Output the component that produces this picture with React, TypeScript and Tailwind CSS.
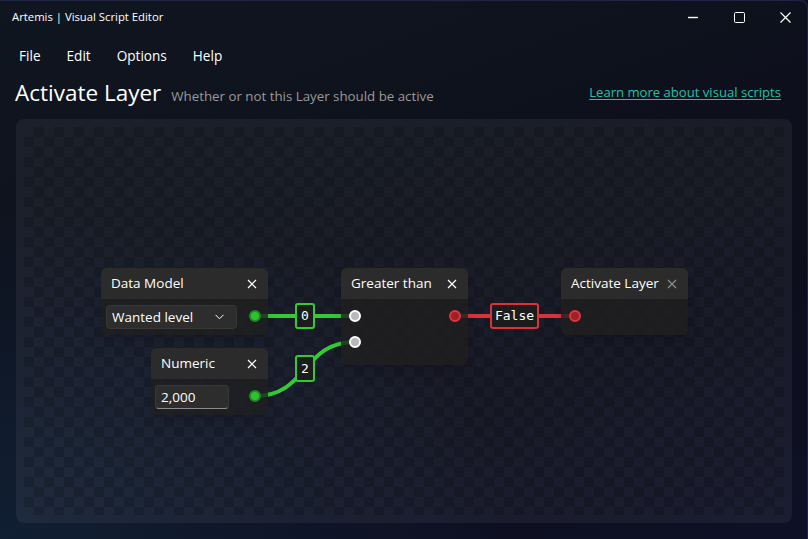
import React from "react";

type PinKind = "green" | "white" | "red";

const CloseIcon = ({ dim }: { dim?: boolean }) => (
  <svg width="10" height="10" viewBox="0 0 10 10" className={dim ? "text-[#8b8b8b]" : "text-white"}>
    <path d="M1 1 L9 9 M9 1 L1 9" stroke="currentColor" strokeWidth="1.2" fill="none" />
  </svg>
);

const PinDot = ({ kind }: { kind: PinKind }) => {
  const cls =
    kind === "green"
      ? "bg-[#2fc22f] border-[#1f8c1f]"
      : kind === "white"
      ? "bg-[#b8b8b8] border-white"
      : "bg-[#a0202a] border-[#e0353d]";
  return <div className={`w-[12px] h-[12px] rounded-full border-2 ${cls}`} />;
};

interface NodeProps {
  title: string;
  left: string;
  top: string;
  width: string;
  height: string;
  dimClose?: boolean;
  children?: React.ReactNode;
}

const ScriptNode: React.FC<NodeProps> = ({ title, left, top, width, height, dimClose, children }) => (
  <div className={`absolute ${left} ${top} ${width} ${height} rounded-md flex flex-col bg-[#1f1f1f]/80 shadow-lg`}>
    <div className="h-[31px] bg-[#2b2b2b] rounded-t-md flex items-center justify-between pl-[10px] pr-[11px] shrink-0">
      <span className="text-[13.5px] text-white">{title}</span>
      <CloseIcon dim={dimClose} />
    </div>
    <div className="relative flex-1">{children}</div>
  </div>
);

const WireLabel = ({ text, color, cls }: { text: string; color: "green" | "red"; cls: string }) => (
  <div
    className={`absolute ${cls} flex items-center justify-center rounded-[3px] border-2 bg-[#1c1c1c] text-white text-[13px] font-['DejaVu_Sans_Mono',monospace] ${
      color === "green" ? "border-[#37c837]" : "border-[#d6343c]"
    }`}
  >
    {text}
  </div>
);

export default function App() {
  return (
    <div className="w-[808px] h-[539px] overflow-hidden relative flex flex-col text-white font-['Open_Sans',sans-serif] bg-[linear-gradient(160deg,#10161f_0%,#0d101c_45%,#0d0e1d_70%,#0e1025_100%)]">
      <div className="absolute inset-0 pointer-events-none bg-[radial-gradient(ellipse_at_0%_100%,rgba(20,45,70,0.55),transparent_45%)]" />
      <div className="absolute inset-0 pointer-events-none rounded-tr-lg border-t border-r border-[#2a2d52]/70" />

      {/* title bar */}
      <div className="relative h-[34px] flex items-center justify-between pl-[12px] shrink-0">
        <span className="text-[11.3px] text-white">Artemis | Visual Script Editor</span>
        <div className="flex items-center h-full">
          <div className="w-[46px] h-full flex items-center justify-center">
            <svg width="10" height="10" viewBox="0 0 10 10">
              <path d="M0 5.5 H10" stroke="white" strokeWidth="1.4" />
            </svg>
          </div>
          <div className="w-[46px] h-full flex items-center justify-center">
            <svg width="11" height="11" viewBox="0 0 11 11">
              <rect x="0.5" y="0.5" width="10" height="10" rx="1.2" stroke="white" strokeWidth="1" fill="none" />
            </svg>
          </div>
          <div className="w-[46px] h-full flex items-center justify-center">
            <svg width="11" height="11" viewBox="0 0 11 11">
              <path d="M0.5 0.5 L10.5 10.5 M10.5 0.5 L0.5 10.5" stroke="white" strokeWidth="1.2" />
            </svg>
          </div>
        </div>
      </div>

      {/* menu */}
      <div className="relative flex items-center h-[44px] pl-[19px] gap-[26px] text-[13.6px] shrink-0">
        <span>File</span>
        <span>Edit</span>
        <span>Options</span>
        <span>Help</span>
      </div>

      {/* header */}
      <div className="relative flex items-end justify-between px-[15px] h-[29px] shrink-0">
        <div className="flex items-baseline gap-[10px]">
          <span className="text-[22.5px] leading-none">Activate Layer</span>
          <span className="text-[13.3px] text-[#9a9a9a]">Whether or not this Layer should be active</span>
        </div>
        <a className="text-[13.1px] text-[#1cc4a4] underline underline-offset-2 mb-[4px] mr-[12px]">
          Learn more about visual scripts
        </a>
      </div>

      {/* canvas */}
      <div className="relative mx-[16px] mt-[12px] mb-[16px] flex-1 rounded-lg bg-white/[0.055] p-[8px]">
        <div className="w-full h-full bg-[repeating-conic-gradient(rgba(0,0,0,0.17)_0_25%,transparent_0_50%)] bg-[length:20px_20px]" />

        <svg className="absolute inset-0 w-full h-full" viewBox="0 0 776 404" preserveAspectRatio="none">
          <path d="M239 197 H339" stroke="#35c935" strokeWidth="4" fill="none" />
          <path d="M239 277 C 292 277, 286 223, 339 223" stroke="#35c935" strokeWidth="4" fill="none" />
          <path d="M439 197 H559" stroke="#d6343c" strokeWidth="4" fill="none" />
        </svg>

        <ScriptNode title="Data Model" left="left-[85px]" top="top-[149px]" width="w-[167px]" height="h-[67px]">
          <div className="absolute left-[5px] top-[6px] w-[131px] h-[24px] rounded-[4px] bg-[#2d2d2d] border border-[#383838] flex items-center justify-between pl-[5px] pr-[12px]">
            <span className="text-[13.5px]">Wanted level</span>
            <svg width="9" height="6" viewBox="0 0 9 6">
              <path d="M0.5 0.8 L4.5 4.8 L8.5 0.8" stroke="white" strokeWidth="1" fill="none" />
            </svg>
          </div>
          <div className="absolute left-[148px] top-[11px]">
            <PinDot kind="green" />
          </div>
        </ScriptNode>

        <ScriptNode title="Numeric" left="left-[135px]" top="top-[229px]" width="w-[117px]" height="h-[67px]">
          <div className="absolute left-[4px] top-[6px] w-[74px] h-[24px] rounded-[4px] bg-[#2d2d2d] border border-[#383838] border-b-[#8a8a8a] flex items-center pl-[5px]">
            <span className="text-[13.5px]">2,000</span>
          </div>
          <div className="absolute left-[98px] top-[11px]">
            <PinDot kind="green" />
          </div>
        </ScriptNode>

        <ScriptNode title="Greater than" left="left-[325px]" top="top-[149px]" width="w-[127px]" height="h-[97px]">
          <div className="absolute left-[8px] top-[11px]">
            <PinDot kind="white" />
          </div>
          <div className="absolute left-[8px] top-[37px]">
            <PinDot kind="white" />
          </div>
          <div className="absolute left-[108px] top-[11px]">
            <PinDot kind="red" />
          </div>
        </ScriptNode>

        <ScriptNode title="Activate Layer" dimClose left="left-[545px]" top="top-[149px]" width="w-[127px]" height="h-[67px]">
          <div className="absolute left-[8px] top-[11px]">
            <PinDot kind="red" />
          </div>
        </ScriptNode>

        <WireLabel text="0" color="green" cls="left-[279px] top-[184px] w-[20px] h-[26px]" />
        <WireLabel text="2" color="green" cls="left-[279px] top-[236px] w-[20px] h-[27px]" />
        <WireLabel text="False" color="red" cls="left-[474px] top-[184px] w-[49px] h-[26px]" />
      </div>
    </div>
  );
}
